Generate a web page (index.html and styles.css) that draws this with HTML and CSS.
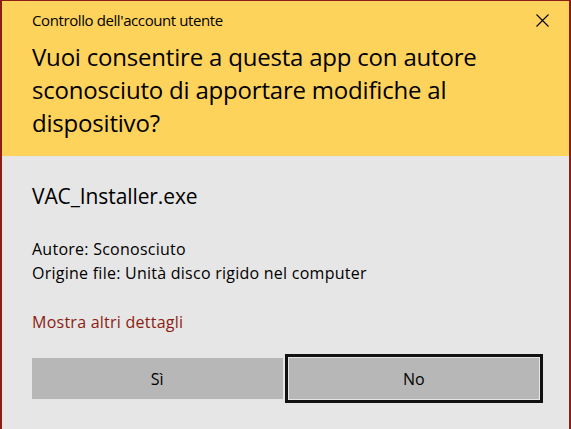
FILE: index.html
```html
<!DOCTYPE html>
<html lang="it">
<head>
    <meta charset="UTF-8">
    <meta name="viewport" content="width=device-width, initial-scale=1.0">
    <title>Controllo dell'account utente</title>
    <link rel="stylesheet" href="styles.css">
</head>
<body>
    <div class="dialog">
        <div class="header">
            <div class="titlebar">
                <span class="caption">Controllo dell'account utente</span>
                <button class="close" aria-label="Chiudi">
                    <svg width="13" height="13" viewBox="0 0 13 13">
                        <path d="M0.5 0.5 L12.5 12.5 M12.5 0.5 L0.5 12.5" stroke="#000" stroke-width="1.1" fill="none"/>
                    </svg>
                </button>
            </div>
            <h1 class="question">Vuoi consentire a questa app con autore sconosciuto di apportare modifiche al dispositivo?</h1>
        </div>

        <div class="content">
            <div class="app-name">VAC_Installer.exe</div>

            <div class="details">
                <p>Autore: Sconosciuto</p>
                <p>Origine file: Unità disco rigido nel computer</p>
            </div>

            <a class="more" href="#">Mostra altri dettagli</a>

            <div class="buttons">
                <button class="btn">Sì</button>
                <button class="btn btn-default">No</button>
            </div>
        </div>
    </div>
</body>
</html>
```

FILE: styles.css
```css
body {
    margin: 0;
    font-family: 'Open Sans', 'Noto Sans', sans-serif;
    background-color: #e6e6e6;
    color: #000;
    overflow: hidden;
}

.dialog {
    border: 2px solid #8b1d12;
    border-top-width: 1px;
    border-bottom: none;
    height: 460px;
    background-color: #e6e6e6;
}

.header {
    background-color: #fed35c;
    padding: 0 4px 17px 30px;
}

.titlebar {
    display: flex;
    justify-content: space-between;
    align-items: center;
    height: 38px;
}

.caption {
    font-size: 15px;
    letter-spacing: -0.4px;
}

.close {
    width: 46px;
    height: 38px;
    border: none;
    background: none;
    padding: 0;
    display: flex;
    align-items: center;
    justify-content: center;
}

.question {
    font-size: 24px;
    font-weight: normal;
    line-height: 33px;
    margin: 1px 0 0;
    max-width: 480px;
    letter-spacing: -0.2px;
}

.content {
    padding: 26px 30px 0 30px;
}

.app-name {
    font-size: 21px;
    letter-spacing: -0.1px;
    line-height: 28px;
}

.details {
    margin-top: 27px;
    font-size: 16px;
    letter-spacing: 0.25px;
}

.details p {
    margin: 0;
    line-height: 24px;
}

.more {
    display: block;
    margin-top: 25px;
    font-size: 16px;
    letter-spacing: 0.25px;
    line-height: 24px;
    color: #8b1d12;
    text-decoration: none;
}

.buttons {
    display: flex;
    gap: 6px;
    margin-top: 24px;
}

.btn {
    flex: 1;
    height: 41px;
    background-color: #b7b7b7;
    border: none;
    font-family: inherit;
    font-size: 16px;
    color: #000;
    padding: 0;
}

.btn-default {
    outline: 3px solid #111;
    outline-offset: 1px;
}
```
